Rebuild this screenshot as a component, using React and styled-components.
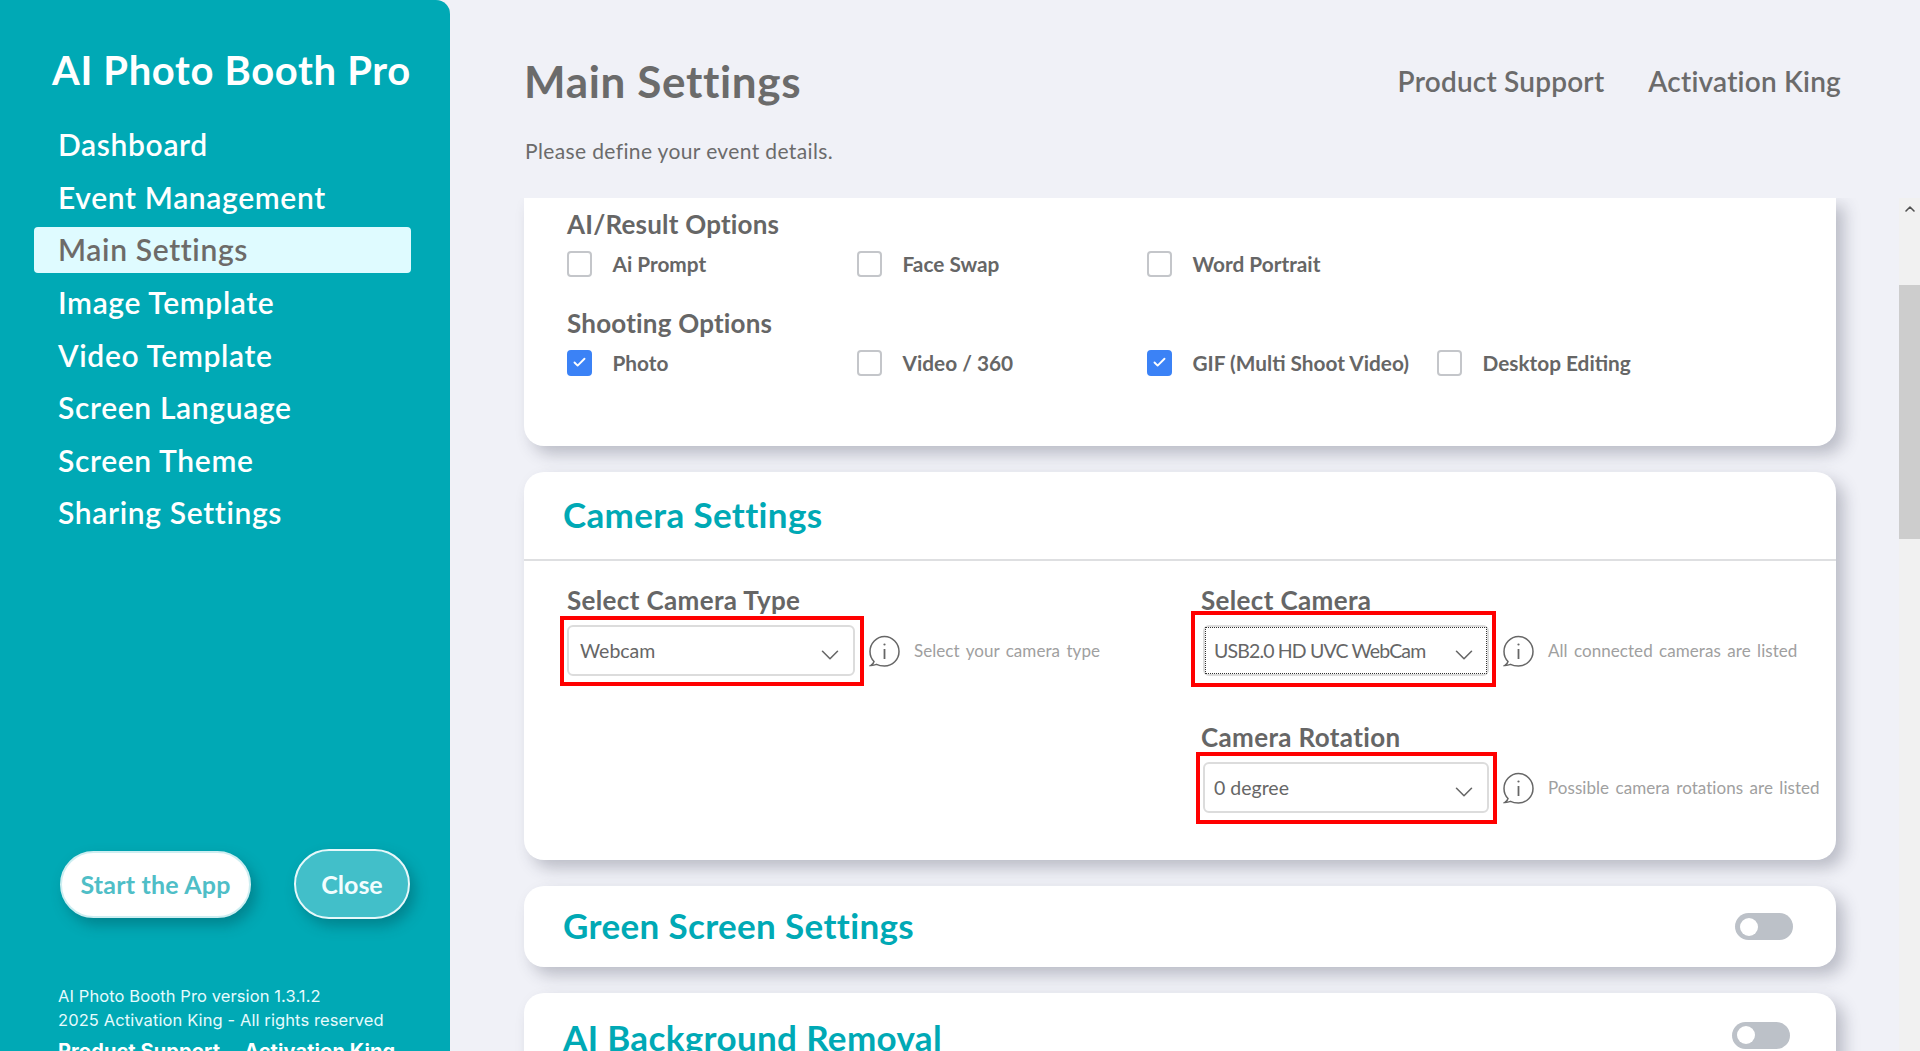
import React from "react"
import styled, { createGlobalStyle } from "styled-components"
import { Check, ChevronDown, ChevronUp } from "lucide-react"

const GlobalStyle = createGlobalStyle`
  html, body {
    margin: 0;
    height: 100%;
    overflow: hidden;
    background: #f0f1f7;
    font-family: "Lato", "Open Sans", sans-serif;
  }
`

const Page = styled.div`
  display: flex;
  height: 100vh;
  overflow: hidden;
  background: #f0f1f7;
`

const Sidebar = styled.aside`
  flex: 0 0 450px;
  height: 1051px;
  box-sizing: border-box;
  padding: 45px 39px 0 34px;
  background: #00a9b5;
  border-top-right-radius: 14px;
  display: flex;
  flex-direction: column;
  overflow: hidden;
`

const Brand = styled.h1`
  margin: 0 0 27px 18px;
  color: #fff;
  font-size: 40px;
  line-height: 50px;
  font-weight: 700;
  letter-spacing: 0.65px;
  white-space: nowrap;
`

const Nav = styled.nav`
  display: flex;
  flex-direction: column;
  gap: 6.65px;
`

const NavItem = styled.a`
  height: 46px;
  line-height: 45px;
  padding-left: 24px;
  border-radius: 4px;
  font-size: 30px;
  font-weight: 600;
  letter-spacing: 0.65px;
  color: ${(p) => (p.$active ? "#6d6b69" : "#fff")};
  background: ${(p) => (p.$active ? "#dffbff" : "transparent")};
`

const Actions = styled.div`
  margin-top: auto;
  display: flex;
  align-items: center;
  padding-left: 26px;
  gap: 43px;
`

const StartButton = styled.button`
  width: 191px;
  height: 67px;
  border: 2px solid #cdeef1;
  border-radius: 34px;
  background: #fff;
  color: #4fbec7;
  font: 700 25px "Lato", sans-serif;
  letter-spacing: 0.2px;
  box-shadow: 5px 7px 14px rgba(0, 60, 70, 0.35);
`

const CloseButton = styled.button`
  width: 116px;
  height: 70px;
  border: 2px solid #e6f8fa;
  border-radius: 35px;
  background: #42bfc9;
  color: #f2fdfe;
  font: 700 25px "Lato", sans-serif;
  box-shadow: 5px 7px 14px rgba(0, 60, 70, 0.35);
`

const Footer = styled.footer`
  margin: 65px 0 -12px 24px;
  color: #e6fbfd;
  font-family: "Inter", sans-serif;
  font-size: 16.5px;
  letter-spacing: 0.1px;
  line-height: 24px;
  white-space: nowrap;
`

const FooterLinks = styled.div`
  margin-top: 7px;
  display: flex;
  gap: 24px;
  font-weight: 700;
  font-size: 20px;
  color: #fff;
`

const Main = styled.main`
  flex: 1;
  min-width: 0;
  display: flex;
  flex-direction: column;
  height: 1051px;
`

const Header = styled.header`
  flex: 0 0 198px;
  box-sizing: border-box;
  padding: 52px 79px 0 75px;
  display: flex;
  flex-direction: column;
`

const TopRow = styled.div`
  display: flex;
  align-items: center;
  justify-content: space-between;
`

const PageTitle = styled.h2`
  margin: 0 0 0 -1px;
  color: #6b6b6b;
  font-size: 44px;
  line-height: 58px;
  font-weight: 700;
  letter-spacing: 0.65px;
`

const TopLinks = styled.div`
  display: flex;
  gap: 44px;
`

const TopLink = styled.a`
  color: #6b6b6b;
  font-size: 28px;
  font-weight: 600;
  letter-spacing: 0.2px;
`

const Subtitle = styled.p`
  margin: 28px 0 0;
  color: #6b6b6b;
  font-size: 21px;
  line-height: 26px;
  letter-spacing: 0.37px;
`

const Body = styled.div`
  flex: 1;
  min-height: 0;
  display: flex;
  overflow: hidden;
`

const Cards = styled.div`
  flex: 1;
  min-width: 0;
  padding: 0 63px 0 74px;
  display: flex;
  flex-direction: column;
  gap: 26px;
`

const Card = styled.section`
  flex: none;
  box-sizing: border-box;
  height: ${(p) => p.$height}px;
  background: #fff;
  border-radius: ${(p) => (p.$clipped ? "0 0 20px 20px" : "20px")};
  box-shadow: 8px 8px 16px rgba(50, 55, 75, 0.28);
`

const OptionsBody = styled.div`
  padding: 10px 0 0 43px;
`

const GroupTitle = styled.h3`
  margin: 0 0 10px;
  color: #666;
  font-size: 26px;
  line-height: 32px;
  font-weight: 700;
  letter-spacing: 0.2px;
`

const OptionRow = styled.div`
  display: grid;
  grid-template-columns: repeat(4, 290px);
  margin-bottom: 30px;
`

const Option = styled.label`
  display: flex;
  align-items: center;
  gap: 20.5px;
  height: 27px;
  color: #666;
  font-size: 20.8px;
  font-weight: 700;
  white-space: nowrap;
`

const Box = styled.span`
  box-sizing: border-box;
  flex: 0 0 25px;
  height: 26px;
  border-radius: 4px;
  border: 2px solid ${(p) => (p.$checked ? "#3b82f6" : "#c4c6ca")};
  background: ${(p) => (p.$checked ? "#3b82f6" : "#fff")};
  color: #fff;
  display: flex;
  align-items: center;
  justify-content: center;
`

const CardHead = styled.div`
  height: 87px;
  padding-left: 39px;
  display: flex;
  align-items: center;
  border-bottom: 2px solid #dedfe1;
`

const CardTitle = styled.h2`
  margin: ${(p) => (p.$low ? "4px 0 0" : "0 0 4px")};
  color: #00a9b5;
  font-size: 35px;
  font-weight: 700;
  letter-spacing: 0.35px;
  white-space: nowrap;
`

const FieldGrid = styled.div`
  display: grid;
  grid-template-columns: 634px 1fr;
  padding: 23px 0 0 43px;
  row-gap: 45px;
`

const Field = styled.div`
  grid-column: ${(p) => p.$col};
`

const FieldLabel = styled.div`
  color: #666;
  font-size: 26px;
  line-height: 32px;
  font-weight: 700;
  letter-spacing: 0.35px;
  margin-bottom: 9px;
`

const FieldRow = styled.div`
  display: flex;
  align-items: center;
`

const SelectWrap = styled.div`
  position: relative;
  flex: 0 0 ${(p) => p.$width}px;
  margin-left: ${(p) => p.$offset}px;
`

const Select = styled.div`
  box-sizing: border-box;
  height: 51px;
  border: 2px solid #dcdcdc;
  border-radius: 6px;
  background: #fff;
  padding: 0 8px 0 ${(p) => p.$inset}px;
  display: flex;
  align-items: center;
  justify-content: space-between;
  color: #666;
  font-size: 19.5px;
  letter-spacing: ${(p) => (p.$tight ? "-0.85px" : "0")};
  white-space: nowrap;
`

const Focused = styled.span`
  position: absolute;
  inset: 2px;
  border: 1px dotted #333;
  pointer-events: none;
`

const RedBox = styled.span`
  position: absolute;
  top: ${(p) => p.$top}px;
  bottom: ${(p) => p.$bottom}px;
  left: ${(p) => p.$left}px;
  right: ${(p) => p.$right}px;
  border: 4px solid #ff0000;
  pointer-events: none;
`

const Arrow = styled(ChevronDown)`
  flex: none;
  margin-top: 9px;
  color: #666;
`

const InfoIcon = styled.svg`
  flex: none;
  margin-left: 14px;
  width: 31px;
  height: 32px;
  color: #666;
`

const Hint = styled.span`
  margin-left: 14px;
  color: #a0a0a0;
  font-size: 17px;
  letter-spacing: 0.05px;
  word-spacing: 2px;
  white-space: nowrap;
`

const ToggleCard = styled(Card)`
  display: flex;
  align-items: center;
  justify-content: space-between;
  padding: ${(p) => (p.$cut ? "0 46px 0 39px" : "0 43px 0 39px")};
`

const Toggle = styled.span`
  box-sizing: border-box;
  width: 58px;
  height: 27px;
  padding-left: 5px;
  border-radius: 14px;
  background: #bcc1c8;
  display: flex;
  align-items: center;
`

const Knob = styled.span`
  width: 18px;
  height: 18px;
  border-radius: 50%;
  background: #fff;
`

const Scrollbar = styled.div`
  flex: 0 0 21px;
  background: #f1f1f1;
  display: flex;
  flex-direction: column;
  align-items: center;
  padding-top: 3px;
  color: #505050;
`

const Thumb = styled.div`
  align-self: stretch;
  margin-top: 68px;
  height: 254px;
  background: #cdcdcd;
`

const navItems = [
  "Dashboard",
  "Event Management",
  "Main Settings",
  "Image Template",
  "Video Template",
  "Screen Language",
  "Screen Theme",
  "Sharing Settings",
]

const aiOptions = [
  { label: "Ai Prompt" },
  { label: "Face Swap" },
  { label: "Word Portrait" },
]

const shootOptions = [
  { label: "Photo", checked: true },
  { label: "Video / 360" },
  { label: "GIF (Multi Shoot Video)", checked: true },
  { label: "Desktop Editing" },
]

const Info = () => (
  <InfoIcon viewBox="0 0 31 32" fill="none" stroke="currentColor" strokeWidth="1.5">
    <path d="M5 26.5C2.5 24 1 20.5 1 16.5 1 8.5 7.5 1.5 15.5 1.5S30 8.5 30 16.5 23.5 31 15.5 31c-3 0-6-.6-8-1.6-1.5.6-3.5 1-5.5 1 1.5-1 2.7-2.4 3-3.9z" />
    <path d="M15.5 14v10" strokeWidth="1.8" />
    <circle cx="15.5" cy="9.5" r="1.1" fill="currentColor" stroke="none" />
  </InfoIcon>
)

const OptionGroup = ({ title, options }) => (
  <>
    <GroupTitle>{title}</GroupTitle>
    <OptionRow>
      {options.map((o) => (
        <Option key={o.label}>
          <Box $checked={o.checked}>
            {o.checked && <Check size={15} strokeWidth={3} />}
          </Box>
          {o.label}
        </Option>
      ))}
    </OptionRow>
  </>
)

const SelectField = ({ col, label, value, hint, frame, focused }) => (
  <Field $col={col}>
    <FieldLabel>{label}</FieldLabel>
    <FieldRow>
      <SelectWrap $width={col === 1 ? 288 : 286} $offset={col === 1 ? 0 : 2}>
        <Select $inset={col === 1 ? 11 : 9} $tight={focused}>
          {value}
          <Arrow size={30} strokeWidth={1.25} />
        </Select>
        {focused && <Focused />}
        <RedBox $top={frame[0]} $right={frame[1]} $bottom={frame[2]} $left={frame[3]} />
      </SelectWrap>
      <Info />
      <Hint>{hint}</Hint>
    </FieldRow>
  </Field>
)

export default function App() {
  return (
    <>
      <GlobalStyle />
      <Page>
        <Sidebar>
          <Brand>AI Photo Booth Pro</Brand>
          <Nav>
            {navItems.map((n) => (
              <NavItem key={n} $active={n === "Main Settings"}>
                {n}
              </NavItem>
            ))}
          </Nav>
          <Actions>
            <StartButton>Start the App</StartButton>
            <CloseButton>Close</CloseButton>
          </Actions>
          <Footer>
            AI Photo Booth Pro version 1.3.1.2
            <br />
            2025 Activation King - All rights reserved
            <FooterLinks>
              <span>Product Support</span>
              <span>Activation King</span>
            </FooterLinks>
          </Footer>
        </Sidebar>
        <Main>
          <Header>
            <TopRow>
              <PageTitle>Main Settings</PageTitle>
              <TopLinks>
                <TopLink>Product Support</TopLink>
                <TopLink>Activation King</TopLink>
              </TopLinks>
            </TopRow>
            <Subtitle>Please define your event details.</Subtitle>
          </Header>
          <Body>
            <Cards>
              <Card $clipped $height={248}>
                <OptionsBody>
                  <OptionGroup title="AI/Result Options" options={aiOptions} />
                  <OptionGroup title="Shooting Options" options={shootOptions} />
                </OptionsBody>
              </Card>
              <Card $height={388}>
                <CardHead>
                  <CardTitle>Camera Settings</CardTitle>
                </CardHead>
                <FieldGrid>
                  <SelectField
                    col={1}
                    label="Select Camera Type"
                    value="Webcam"
                    hint="Select your camera type"
                    frame={[-9, -9, -10, -7]}
                  />
                  <SelectField
                    col={2}
                    label="Select Camera"
                    value="USB2.0 HD UVC WebCam"
                    hint="All connected cameras are listed"
                    frame={[-14, -7, -11, -12]}
                    focused
                  />
                  <SelectField
                    col={2}
                    label="Camera Rotation"
                    value="0 degree"
                    hint="Possible camera rotations are listed"
                    frame={[-10, -8, -11, -7]}
                  />
                </FieldGrid>
              </Card>
              <ToggleCard $height={81}>
                <CardTitle>Green Screen Settings</CardTitle>
                <Toggle>
                  <Knob />
                </Toggle>
              </ToggleCard>
              <ToggleCard $height={84} $cut>
                <CardTitle $low>AI Background Removal</CardTitle>
                <Toggle>
                  <Knob />
                </Toggle>
              </ToggleCard>
            </Cards>
            <Scrollbar>
              <ChevronUp size={16} strokeWidth={2.4} />
              <Thumb />
            </Scrollbar>
          </Body>
        </Main>
      </Page>
    </>
  )
}
